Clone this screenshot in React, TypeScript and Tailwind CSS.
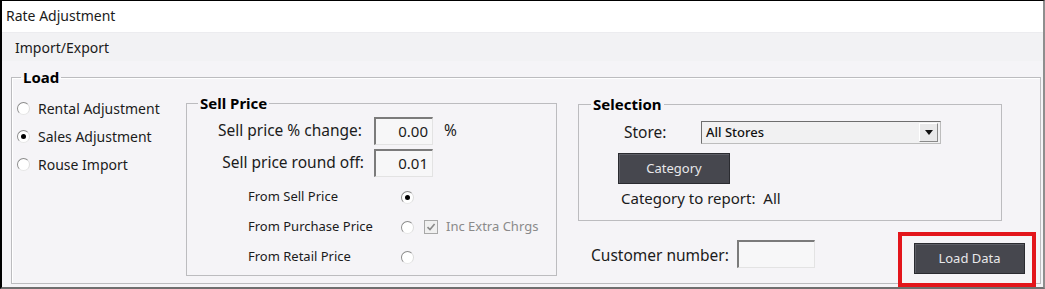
const FONT = { fontFamily: '"Noto Sans", "Open Sans", sans-serif' };

function Radio({ checked = false }: { checked?: boolean }) {
  return (
    <span className="flex h-[13px] w-[13px] shrink-0 items-center justify-center rounded-full border border-t-[#8c8c8c] border-l-[#8c8c8c] border-r-[#dcdcdc] border-b-[#e6e6e6] bg-white">
      {checked && <span className="h-[5px] w-[5px] rounded-full bg-black" />}
    </span>
  );
}

function LoadOption({ label, checked }: { label: string; checked?: boolean }) {
  return (
    <div className="flex h-[28px] items-center gap-[8px]">
      <Radio checked={checked} />
      <span className="text-[14px] text-[#1b1b1b]">{label}</span>
    </div>
  );
}

function PriceSource({ label, checked, extra }: { label: string; checked?: boolean; extra?: boolean }) {
  return (
    <div className="flex h-[30px] items-center pl-[61px]">
      <span className="w-[153px] text-[13px] text-[#1b1b1b]">{label}</span>
      <Radio checked={checked} />
      {extra && (
        <div className="ml-[10px] flex items-center gap-[8px]">
          <span className="flex h-[14px] w-[14px] items-center justify-center border border-[#a8a8a8] bg-[#f0f0f0]">
            <svg width="10" height="10" viewBox="0 0 10 10">
              <path d="M1.5 5.2 L4 7.6 L8.6 2" fill="none" stroke="#8a8a8a" strokeWidth="1.6" />
            </svg>
          </span>
          <span className="text-[13px] text-[#8a8a8a]">Inc Extra Chrgs</span>
        </div>
      )}
    </div>
  );
}

function NumberBox({ value }: { value: string }) {
  return (
    <div className="flex h-[28px] w-[59px] items-center justify-end border border-t-2 border-l-2 border-t-[#7b7b7b] border-l-[#7b7b7b] border-r-[#e3e3e3] border-b-[#e3e3e3] bg-[#f7f7f8] pr-[4px] text-[15px] text-[#1b1b1b]">
      {value}
    </div>
  );
}

function DarkButton({ label, className }: { label: string; className: string }) {
  return (
    <div
      className={
        "flex items-center justify-center border border-[#2a2b30] bg-[#46474e] text-[13px] text-[#e8e8ea] shadow-[inset_1px_1px_0_#5d5e66] " +
        className
      }
    >
      {label}
    </div>
  );
}

export default function App() {
  return (
    <div
      style={FONT}
      className="flex h-[289px] w-[1045px] flex-col border-t border-l-2 border-r-2 border-b-2 border-t-black border-l-black border-r-[#8e8e8e] border-b-[#6f6f6f] bg-[#f5f4f7] text-[#1b1b1b]"
    >
      {/* title bar */}
      <div className="flex h-[32px] shrink-0 items-center border-b border-[#ececef] bg-white pb-[3px] pl-[4px] text-[14px]">
        Rate Adjustment
      </div>

      {/* menu */}
      <div className="flex h-[28px] shrink-0 items-center bg-[#f2f2f4] pl-[13px] text-[14px]">Import/Export</div>

      <div className="pl-[9px] pr-[2px] pt-[7px]">
        <fieldset className="h-[216px] border border-[#bcbcbf] shadow-[inset_1px_1px_0_#fff]">
          <legend className="ml-[9px] px-[2px] text-[15px] leading-[18px] font-bold text-black">Load</legend>

          <div className="flex">
            {/* load type */}
            <div className="w-[174px] pl-[5px] pt-[8px]">
              <LoadOption label="Rental Adjustment" />
              <LoadOption label="Sales Adjustment" checked />
              <LoadOption label="Rouse Import" />
            </div>

            {/* sell price */}
            <fieldset className="mt-[8px] h-[182px] w-[371px] border border-[#bcbcbf]">
              <legend className="ml-[11px] px-[2px] text-[15px] leading-[18px] font-bold text-black">
                Sell Price
              </legend>
              <div className="mt-[5px] flex items-center">
                <span className="w-[175px] text-right text-[15.5px]">Sell price % change:</span>
                <div className="ml-[12px]">
                  <NumberBox value="0.00" />
                </div>
                <span className="ml-[11px] text-[15.5px]">%</span>
              </div>
              <div className="mt-[4px] flex items-center">
                <span className="w-[177px] text-right text-[15.5px]">Sell price round off:</span>
                <div className="ml-[10px]">
                  <NumberBox value="0.01" />
                </div>
              </div>
              <div className="mt-[5px]">
                <PriceSource label="From Sell Price" checked />
                <PriceSource label="From Purchase Price" extra />
                <PriceSource label="From Retail Price" />
              </div>
            </fieldset>

            {/* selection + load */}
            <div className="ml-[21px] flex-1 pr-[15px]">
              <fieldset className="mt-[9px] h-[126px] w-[424px] border border-[#bcbcbf]">
                <legend className="ml-[12px] px-[2px] text-[15px] leading-[18px] font-bold text-black">
                  Selection
                </legend>
                <div className="mt-[8px] flex items-center pl-[45px]">
                  <span className="w-[77px] text-[15.5px]">Store:</span>
                  <div className="flex h-[23px] w-[240px] items-center justify-between border border-t-[#6e6e6e] border-l-[#6e6e6e] border-r-[#bdbdbd] border-b-[#bdbdbd] bg-[#f1f1f2] pl-[4px] pr-[2px]">
                    <span className="text-[13px] font-medium text-[#111]">All Stores</span>
                    <span className="flex h-[19px] w-[19px] items-center justify-center border border-t-white border-l-white border-r-[#8a8a8a] border-b-[#8a8a8a] bg-[#e9e9ea]">
                      <svg width="8" height="5" viewBox="0 0 8 5">
                        <path d="M0 0 H8 L4 5 Z" fill="#111" />
                      </svg>
                    </span>
                  </div>
                </div>
                <DarkButton label="Category" className="ml-[39px] mt-[9px] h-[31px] w-[112px]" />
                <div className="mt-[4px] flex h-[20px] items-center pl-[42px] text-[15px]">
                  Category to report:&nbsp;&nbsp;All
                </div>
              </fieldset>

              <div className="flex items-start">
                <span className="ml-[13px] mt-[23px] w-[146px] text-[15.5px]">Customer number:</span>
                <div className="mt-[19px] h-[28px] w-[78px] border border-t-2 border-l-2 border-t-[#7b7b7b] border-l-[#7b7b7b] border-r-[#e3e3e3] border-b-[#e3e3e3] bg-[#f7f7f8]" />
                <div className="relative ml-auto mt-[22px]">
                  <DarkButton label="Load Data" className="h-[31px] w-[111px]" />
                  <div className="pointer-events-none absolute -top-[11px] -right-[11px] -bottom-[13px] -left-[16px] border-4 border-[#e3151b]" />
                </div>
              </div>
            </div>
          </div>
        </fieldset>
      </div>
    </div>
  );
}
